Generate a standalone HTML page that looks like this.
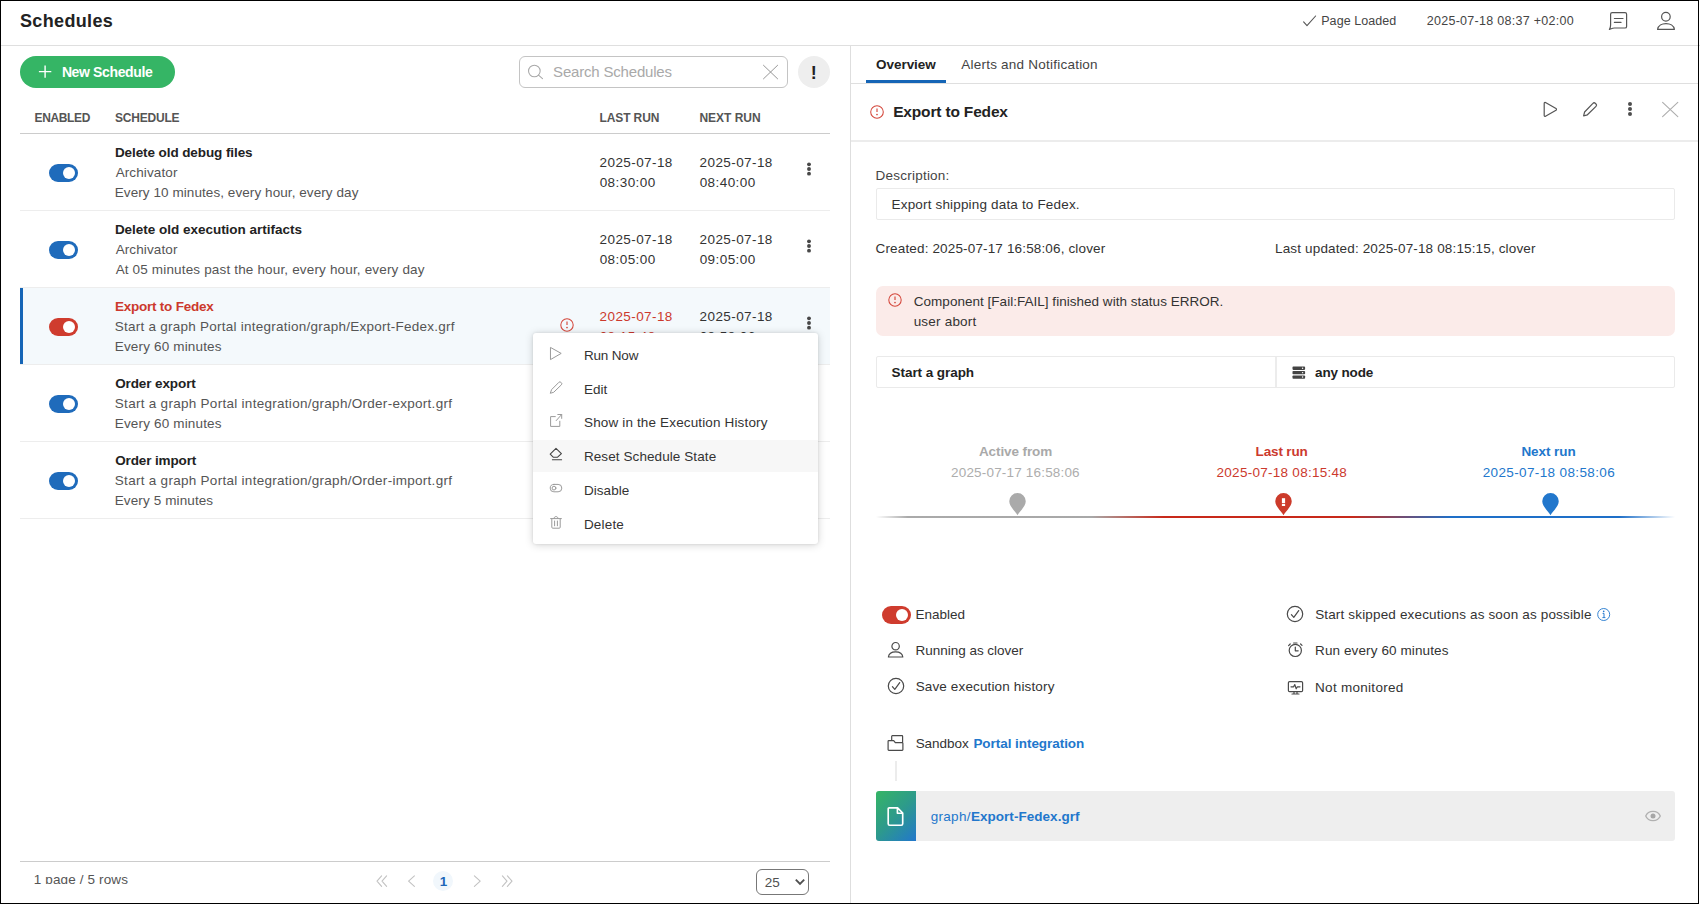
<!DOCTYPE html>
<html lang="en">
<head>
<meta charset="utf-8">
<title>Schedules</title>
<style>
*{box-sizing:border-box;margin:0;padding:0}
html,body{width:1700px;height:905px;overflow:hidden;background:#fff}
body{font-family:"Liberation Sans",sans-serif;font-size:13.5px;color:#333;position:relative}
.abs{position:absolute}
.t{position:absolute;white-space:nowrap;line-height:20px}
#frame{position:absolute;left:0;top:0;width:1699px;height:904px;border:1px solid #000;z-index:50;pointer-events:none}
.hline{position:absolute;height:1px;background:#dcdcdc}
.vline{position:absolute;width:1px;background:#dcdcdc}
svg{position:absolute;overflow:visible}
.ico{fill:none;stroke:#4a4a4a;stroke-width:1.2;stroke-linecap:round;stroke-linejoin:round}
</style>
</head>
<body>
<div id="frame"></div>

<!-- ===== top header ===== -->
<div id="hdr">
<div class="t" style="left:19.95px;top:11px;font-size:18px;color:#222;font-weight:bold;letter-spacing:0.359px;">Schedules</div>
<svg class="ico" style="left:1300px;top:12px;stroke:#555;stroke-width:1.1" width="20" height="18" viewBox="0 0 20 18"><path d="M3.6 9.9L7 13.7L15.6 4"/></svg>
<div class="t" style="left:1321.21px;top:11px;font-size:12.5px;color:#444;letter-spacing:0.071px;">Page Loaded</div><div class="t" style="left:1426.70px;top:11px;font-size:12.5px;color:#444;letter-spacing:0.289px;">2025-07-18 08:37 +02:00</div>
<svg class="ico" style="left:1606px;top:9px;stroke:#555" width="24" height="24" viewBox="0 0 24 24"><path d="M6.2 3.7H19A1.6 1.6 0 0 1 20.6 5.3V17.4A1.6 1.6 0 0 1 19 19H8.5C6.5 19 5.2 19.8 3.4 20.5C4.4 18.8 4.6 17.6 4.6 16V5.3A1.6 1.6 0 0 1 6.2 3.7ZM8.4 9.5H17M8.4 13.4H15"/></svg>
<svg class="ico" style="left:1654px;top:9px;stroke:#555" width="24" height="24" viewBox="0 0 24 24"><circle cx="11.9" cy="7.75" r="4.3"/><path d="M3.6 20.4C4.6 12.6 19.4 12.6 20.4 20.4Z"/></svg>
<div class="hline" style="left:0;top:45px;width:1700px;background:#dfdfdf"></div>
</div>

<!-- ===== left panel ===== -->
<div id="left">
<div class="abs" style="left:20px;top:56px;width:155px;height:32px;border-radius:16px;background:#35b565"></div>
<svg style="left:38px;top:64px" width="16" height="16" viewBox="0 0 16 16"><path d="M7.1 1.4V13.8M0.9 7.6H13.3" stroke="#fff" stroke-width="1.4" fill="none"/></svg>
<div class="t" style="left:61.89px;top:62px;font-size:14px;color:#fff;font-weight:bold;letter-spacing:-0.361px;">New Schedule</div>
<div class="abs" style="left:519px;top:56px;width:269px;height:32px;border:1px solid #c4c4c4;border-radius:6px;background:#fff"></div>
<svg class="ico" style="left:526px;top:63px;stroke:#a8a8a8;stroke-width:1.05" width="20" height="20" viewBox="0 0 20 20"><circle cx="8.35" cy="8" r="5.8"/><path d="M12.5 12.1L16.5 15.6"/></svg>
<div class="t" style="left:553.10px;top:62px;font-size:15px;color:#a9a9a9;letter-spacing:-0.189px;">Search Schedules</div>
<svg class="ico" style="left:762px;top:64px;stroke:#909090;stroke-width:0.95;stroke-linecap:butt" width="18" height="18" viewBox="0 0 18 18"><path d="M1.2 1L15.9 15.1M15.9 1L1.2 15.1"/></svg>
<div class="abs" style="left:798px;top:56px;width:32px;height:32px;border-radius:16px;background:#eeeeee"></div>
<div class="t" style="left:810.74px;top:63px;font-size:18px;color:#222;font-weight:bold;">!</div>

<div class="t" style="left:34.58px;top:108px;font-size:12px;color:#555;font-weight:bold;letter-spacing:-0.373px;">ENABLED</div><div class="t" style="left:115.03px;top:108px;font-size:12px;color:#555;font-weight:bold;letter-spacing:-0.213px;">SCHEDULE</div><div class="t" style="left:599.58px;top:108px;font-size:12px;color:#555;font-weight:bold;letter-spacing:-0.127px;">LAST RUN</div><div class="t" style="left:699.48px;top:108px;font-size:12px;color:#555;font-weight:bold;letter-spacing:-0.031px;">NEXT RUN</div>
<div class="hline" style="left:20px;top:133px;width:810px;background:#cccccc"></div>
<div class="hline" style="left:20px;top:210px;width:810px;background:#ededed"></div><div class="abs" style="left:49px;top:164px;width:29px;height:18px;border-radius:9px;background:#1f6bbb"><div class="abs" style="left:13.7px;top:2.8px;width:12.4px;height:12.4px;border-radius:6.2px;background:#fff"></div></div><div class="t" style="left:114.90px;top:143px;font-size:13.5px;color:#222;font-weight:bold;letter-spacing:-0.087px;">Delete old debug files</div><div class="t" style="left:115.63px;top:163px;font-size:13.5px;color:#555;letter-spacing:0.116px;">Archivator</div><div class="t" style="left:114.75px;top:183px;font-size:13.5px;color:#555;letter-spacing:0.073px;">Every 10 minutes, every hour, every day</div><div class="t" style="left:599.56px;top:153px;font-size:13.5px;color:#333;letter-spacing:0.417px;">2025-07-18</div><div class="t" style="left:599.63px;top:173px;font-size:13.5px;color:#333;letter-spacing:0.441px;">08:30:00</div><div class="t" style="left:699.56px;top:153px;font-size:13.5px;color:#333;letter-spacing:0.417px;">2025-07-18</div><div class="t" style="left:699.63px;top:173px;font-size:13.5px;color:#333;letter-spacing:0.441px;">08:40:00</div><svg style="left:804.9px;top:158.8px" width="8" height="20" viewBox="-4 -10 8 20"><circle cx="0" cy="-4.65" r="1.95" fill="#484848"/><circle cx="0" cy="0" r="1.95" fill="#484848"/><circle cx="0" cy="4.65" r="1.95" fill="#484848"/></svg>
<div class="hline" style="left:20px;top:287px;width:810px;background:#ededed"></div><div class="abs" style="left:49px;top:241px;width:29px;height:18px;border-radius:9px;background:#1f6bbb"><div class="abs" style="left:13.7px;top:2.8px;width:12.4px;height:12.4px;border-radius:6.2px;background:#fff"></div></div><div class="t" style="left:114.90px;top:220px;font-size:13.5px;color:#222;font-weight:bold;letter-spacing:-0.018px;">Delete old execution artifacts</div><div class="t" style="left:115.63px;top:240px;font-size:13.5px;color:#555;letter-spacing:0.116px;">Archivator</div><div class="t" style="left:115.63px;top:260px;font-size:13.5px;color:#555;letter-spacing:0.162px;">At 05 minutes past the hour, every hour, every day</div><div class="t" style="left:599.56px;top:230px;font-size:13.5px;color:#333;letter-spacing:0.417px;">2025-07-18</div><div class="t" style="left:599.63px;top:250px;font-size:13.5px;color:#333;letter-spacing:0.441px;">08:05:00</div><div class="t" style="left:699.56px;top:230px;font-size:13.5px;color:#333;letter-spacing:0.417px;">2025-07-18</div><div class="t" style="left:699.63px;top:250px;font-size:13.5px;color:#333;letter-spacing:0.441px;">09:05:00</div><svg style="left:804.9px;top:235.8px" width="8" height="20" viewBox="-4 -10 8 20"><circle cx="0" cy="-4.65" r="1.95" fill="#484848"/><circle cx="0" cy="0" r="1.95" fill="#484848"/><circle cx="0" cy="4.65" r="1.95" fill="#484848"/></svg>
<div class="abs" style="left:20px;top:288px;width:810px;height:76px;background:#f4f9fc"></div><div class="abs" style="left:20px;top:288px;width:3px;height:77px;background:#1565b6"></div><div class="hline" style="left:20px;top:364px;width:810px;background:#ededed"></div><div class="abs" style="left:49px;top:318px;width:29px;height:18px;border-radius:9px;background:#cf3c2e"><div class="abs" style="left:13.7px;top:2.8px;width:12.4px;height:12.4px;border-radius:6.2px;background:#fff"></div></div><div class="t" style="left:114.90px;top:297px;font-size:13.5px;color:#cc392d;font-weight:bold;letter-spacing:-0.222px;">Export to Fedex</div><div class="t" style="left:114.84px;top:317px;font-size:13.5px;color:#555;letter-spacing:0.244px;">Start a graph Portal integration/graph/Export-Fedex.grf</div><div class="t" style="left:114.75px;top:337px;font-size:13.5px;color:#555;letter-spacing:0.162px;">Every 60 minutes</div><svg style="left:804.9px;top:312.8px" width="8" height="20" viewBox="-4 -10 8 20"><circle cx="0" cy="-4.65" r="1.95" fill="#484848"/><circle cx="0" cy="0" r="1.95" fill="#484848"/><circle cx="0" cy="4.65" r="1.95" fill="#484848"/></svg>
<div class="hline" style="left:20px;top:441px;width:810px;background:#ededed"></div><div class="abs" style="left:49px;top:395px;width:29px;height:18px;border-radius:9px;background:#1f6bbb"><div class="abs" style="left:13.7px;top:2.8px;width:12.4px;height:12.4px;border-radius:6.2px;background:#fff"></div></div><div class="t" style="left:115.19px;top:374px;font-size:13.5px;color:#222;font-weight:bold;letter-spacing:-0.107px;">Order export</div><div class="t" style="left:114.84px;top:394px;font-size:13.5px;color:#555;letter-spacing:0.282px;">Start a graph Portal integration/graph/Order-export.grf</div><div class="t" style="left:114.75px;top:414px;font-size:13.5px;color:#555;letter-spacing:0.162px;">Every 60 minutes</div>
<div class="hline" style="left:20px;top:518px;width:810px;background:#ededed"></div><div class="abs" style="left:49px;top:472px;width:29px;height:18px;border-radius:9px;background:#1f6bbb"><div class="abs" style="left:13.7px;top:2.8px;width:12.4px;height:12.4px;border-radius:6.2px;background:#fff"></div></div><div class="t" style="left:115.19px;top:451px;font-size:13.5px;color:#222;font-weight:bold;letter-spacing:-0.123px;">Order import</div><div class="t" style="left:114.84px;top:471px;font-size:13.5px;color:#555;letter-spacing:0.282px;">Start a graph Portal integration/graph/Order-import.grf</div><div class="t" style="left:114.75px;top:491px;font-size:13.5px;color:#555;letter-spacing:0.113px;">Every 5 minutes</div>
<div class="t" style="left:599.56px;top:307px;font-size:13.5px;color:#cc392d;letter-spacing:0.417px;">2025-07-18</div><div class="t" style="left:599.63px;top:327px;font-size:13.5px;color:#cc392d;letter-spacing:0.445px;">08:15:48</div><div class="t" style="left:699.56px;top:307px;font-size:13.5px;color:#333;letter-spacing:0.417px;">2025-07-18</div><div class="t" style="left:699.63px;top:327px;font-size:13.5px;color:#333;letter-spacing:0.448px;">08:58:06</div><svg style="left:558.8px;top:317.4px" width="16" height="16" viewBox="-8 -8 16 16"><circle cx="0" cy="0" r="6.2" fill="none" stroke="#d4473b" stroke-width="1.05"/><path d="M0 -3.5V0.1" stroke="#d4473b" stroke-width="1.15" fill="none"/><circle cx="0" cy="2.5" r="0.85" fill="#d4473b"/></svg>
<div class="hline" style="left:20px;top:861px;width:810px;background:#cccccc"></div>
<div class="abs" style="left:20px;top:866px;width:200px;height:18px;overflow:hidden"><div class="t" style="left:13.81px;top:4px;font-size:13.5px;color:#555;letter-spacing:0.133px;">1 page / 5 rows</div></div>
<svg class="ico" style="left:374px;top:873px;stroke:#c2c2c2;stroke-width:1.1" width="16" height="16" viewBox="0 0 16 16"><path d="M7.6 2.8L3 8.1L7.6 13.4M12.6 2.8L8 8.1L12.6 13.4"/></svg>
<svg class="ico" style="left:404px;top:873px;stroke:#c2c2c2;stroke-width:1.1" width="16" height="16" viewBox="0 0 16 16"><path d="M10.4 2.8L4.6 8.1L10.4 13.4"/></svg>
<div class="abs" style="left:433px;top:871px;width:20px;height:20px;border-radius:10px;background:#f1f7fc"></div>
<div class="t" style="left:439.75px;top:872px;font-size:13.5px;color:#1e66b8;font-weight:bold;">1</div>
<svg class="ico" style="left:469px;top:873px;stroke:#c2c2c2;stroke-width:1.1" width="16" height="16" viewBox="0 0 16 16"><path d="M5.4 2.8L11.2 8.1L5.4 13.4"/></svg>
<svg class="ico" style="left:499px;top:873px;stroke:#c2c2c2;stroke-width:1.1" width="16" height="16" viewBox="0 0 16 16"><path d="M3.4 2.8L8 8.1L3.4 13.4M8.4 2.8L13 8.1L8.4 13.4"/></svg>
<div class="abs" style="left:756px;top:869px;width:53px;height:26px;border:1px solid #777;border-radius:6px;background:#fff"></div>
<div class="t" style="left:764.86px;top:873px;font-size:13.5px;color:#505050;">25</div>
<svg style="left:794px;top:877px" width="12" height="10" viewBox="0 0 12 10"><path d="M1.8 2.6L6 6.8L10.2 2.6" fill="none" stroke="#505050" stroke-width="1.9"/></svg>
</div>

<!-- ===== right panel ===== -->
<div id="right">
<div class="vline" style="left:850px;top:46px;height:858px;background:#dedede"></div>
<div class="t" style="left:875.99px;top:55px;font-size:13.5px;color:#222;font-weight:bold;letter-spacing:-0.029px;">Overview</div><div class="t" style="left:961.23px;top:55px;font-size:13.5px;color:#444;letter-spacing:0.231px;">Alerts and Notification</div>
<div class="abs" style="left:866px;top:80px;width:80px;height:3px;background:#1565b6"></div>
<div class="hline" style="left:851px;top:83px;width:848px;background:#dfdfdf"></div>
<svg style="left:869px;top:103.6px" width="16" height="16" viewBox="-8 -8 16 16"><circle cx="0" cy="0" r="6.3" fill="none" stroke="#d4473b" stroke-width="1.05"/><path d="M0 -3.5V0.1" stroke="#d4473b" stroke-width="1.15" fill="none"/><circle cx="0" cy="2.5" r="0.85" fill="#d4473b"/></svg><div class="t" style="left:893.21px;top:102px;font-size:15.5px;color:#222;font-weight:bold;letter-spacing:-0.170px;">Export to Fedex</div>
<svg class="ico" style="left:1540px;top:100px;stroke:#555" width="20" height="20" viewBox="0 0 20 20"><path d="M4.2 3.4C4.2 2.6 4.9 2.3 5.5 2.6L16 8.6C16.6 9 16.6 9.8 16 10.2L5.5 16.2C4.9 16.5 4.2 16.2 4.2 15.4Z"/></svg>
<svg class="ico" style="left:1580px;top:100px;stroke:#555" width="20" height="20" viewBox="0 0 20 20"><path d="M3.6 15.8L4.6 12L12.9 3.4A1.7 1.7 0 0 1 15.3 3.3L16 4A1.7 1.7 0 0 1 16 6.4L7.4 14.8Z"/></svg>
<svg style="left:1626px;top:99.3px" width="8" height="20" viewBox="-4 -10 8 20"><circle cx="0" cy="-5" r="2" fill="#4e4e4e"/><circle cx="0" cy="0" r="2" fill="#4e4e4e"/><circle cx="0" cy="5" r="2" fill="#4e4e4e"/></svg>
<svg class="ico" style="left:1660px;top:100px;stroke:#adadad;stroke-width:1.1" width="20" height="20" viewBox="0 0 20 20"><path d="M2.6 2.3L17.8 16.7M17.8 2.3L2.6 16.7"/></svg>
<div class="abs" style="left:851px;top:140px;width:848px;height:2px;background:#ececec"></div>

<div class="t" style="left:875.55px;top:166px;font-size:13.5px;color:#444;letter-spacing:0.229px;">Description:</div>
<div class="abs" style="left:876px;top:188px;width:799px;height:32px;border:1px solid #eaeaea;border-radius:2px;background:#fff"></div>
<div class="t" style="left:891.55px;top:195px;font-size:13.5px;color:#333;letter-spacing:0.169px;">Export shipping data to Fedex.</div><div class="t" style="left:875.59px;top:239px;font-size:13.5px;color:#333;letter-spacing:0.150px;">Created: 2025-07-17 16:58:06, clover</div><div class="t" style="left:1275.05px;top:239px;font-size:13.5px;color:#333;letter-spacing:0.150px;">Last updated: 2025-07-18 08:15:15, clover</div>
<div class="abs" style="left:876px;top:286px;width:799px;height:50px;border-radius:7px;background:#fbebe9"></div>
<svg style="left:886.8px;top:292.2px" width="16" height="16" viewBox="-8 -8 16 16"><circle cx="0" cy="0" r="6.2" fill="none" stroke="#d4473b" stroke-width="1.05"/><path d="M0 -3.5V0.1" stroke="#d4473b" stroke-width="1.15" fill="none"/><circle cx="0" cy="2.5" r="0.85" fill="#d4473b"/></svg><div class="t" style="left:913.79px;top:292px;font-size:13.5px;color:#333;letter-spacing:0.024px;">Component [Fail:FAIL] finished with status ERROR.</div><div class="t" style="left:913.65px;top:312px;font-size:13.5px;color:#333;letter-spacing:0.207px;">user abort</div>
<div class="abs" style="left:876px;top:356px;width:799px;height:32px;border:1px solid #eaeaea;border-radius:2px;background:#fff"></div>
<div class="abs" style="left:1275px;top:357px;width:2px;height:30px;background:#ececec"></div>
<div class="t" style="left:891.60px;top:363px;font-size:13.5px;color:#222;font-weight:bold;letter-spacing:-0.066px;">Start a graph</div>
<svg style="left:1292px;top:365.5px" width="14" height="14" viewBox="0 0 14 14"><rect x="0.5" y="0.6" width="12.6" height="3.3" rx="0.8" fill="#444"/><rect x="0.5" y="5" width="12.6" height="3.3" rx="0.8" fill="#444"/><rect x="0.5" y="9.4" width="12.6" height="3.3" rx="0.8" fill="#444"/><circle cx="10.6" cy="2.25" r="0.7" fill="#fff"/><circle cx="10.6" cy="6.65" r="0.7" fill="#fff"/><circle cx="10.6" cy="11.05" r="0.7" fill="#fff"/></svg>
<div class="t" style="left:1315.09px;top:363px;font-size:13.5px;color:#222;font-weight:bold;letter-spacing:-0.155px;">any node</div>

<div class="t" style="left:978.91px;top:442px;font-size:13.5px;color:#a9a9a9;font-weight:bold;letter-spacing:-0.093px;">Active from</div><div class="t" style="left:951.06px;top:463px;font-size:13.5px;color:#adadad;letter-spacing:0.179px;">2025-07-17 16:58:06</div><div class="t" style="left:1255.60px;top:442px;font-size:13.5px;color:#cc392d;font-weight:bold;letter-spacing:-0.155px;">Last run</div><div class="t" style="left:1216.56px;top:463px;font-size:13.5px;color:#cc392d;letter-spacing:0.272px;">2025-07-18 08:15:48</div><div class="t" style="left:1521.40px;top:442px;font-size:13.5px;color:#2277cc;font-weight:bold;letter-spacing:-0.056px;">Next run</div><div class="t" style="left:1482.66px;top:463px;font-size:13.5px;color:#2277cc;letter-spacing:0.371px;">2025-07-18 08:58:06</div>
<div class="abs" style="left:876px;top:516px;width:799px;height:2px;background:linear-gradient(to right,rgba(170,170,170,0) 0%,#aaaaaa 4%,#a8a8a8 27%,#c8291a 36%,#c8291a 59.5%,#1e6fc8 72%,#1e6fc8 93%,rgba(30,111,200,0) 100%)"></div>
<svg style="left:1008.8px;top:492.8px" width="17" height="23" viewBox="-8.5 0 17 23"><path d="M0 22.2C-2.2 18.6 -8.25 13.2 -8.25 8.25A8.25 8.25 0 0 1 8.25 8.25C8.25 13.2 2.2 18.6 0 22.2Z" fill="#aaaaaa"/></svg><svg style="left:1275px;top:492.8px" width="17" height="23" viewBox="-8.5 0 17 23"><path d="M0 22.2C-2.2 18.6 -8.25 13.2 -8.25 8.25A8.25 8.25 0 0 1 8.25 8.25C8.25 13.2 2.2 18.6 0 22.2Z" fill="#cc3b2b"/><rect x="-1.6" y="5.2" width="3.2" height="5" fill="#fff"/><rect x="-1.6" y="11" width="3.2" height="2" fill="#fff"/></svg><svg style="left:1541.5px;top:492.8px" width="17" height="23" viewBox="-8.5 0 17 23"><path d="M0 22.2C-2.2 18.6 -8.25 13.2 -8.25 8.25A8.25 8.25 0 0 1 8.25 8.25C8.25 13.2 2.2 18.6 0 22.2Z" fill="#2277cc"/></svg>

<div class="abs" style="left:882px;top:606px;width:29px;height:18px;border-radius:9px;background:#cf3c2e"><div class="abs" style="left:13.7px;top:2.8px;width:12.4px;height:12.4px;border-radius:6.2px;background:#fff"></div></div><div class="t" style="left:915.55px;top:605px;font-size:13.5px;color:#333;letter-spacing:-0.017px;">Enabled</div>
<svg class="ico" style="left:885px;top:640px" width="20" height="20" viewBox="0 0 20 20"><circle cx="10.6" cy="6.2" r="3.7"/><path d="M3.4 17C4.2 10.2 17 10.2 17.8 17Z"/></svg>
<div class="t" style="left:915.55px;top:641px;font-size:13.5px;color:#333;letter-spacing:-0.022px;">Running as clover</div><svg class="ico" style="left:885.5px;top:676.4px" width="20" height="20" viewBox="-10 -10 20 20"><circle cx="0" cy="0" r="7.7"/><path d="M-3.6 0.6L-1.2 3.4L3.7 -3.4"/></svg><div class="t" style="left:915.64px;top:677px;font-size:13.5px;color:#333;letter-spacing:0.141px;">Save execution history</div><svg class="ico" style="left:1285.3px;top:604.4px" width="20" height="20" viewBox="-10 -10 20 20"><circle cx="0" cy="0" r="7.7"/><path d="M-3.6 0.6L-1.2 3.4L3.7 -3.4"/></svg><div class="t" style="left:1315.14px;top:605px;font-size:13.5px;color:#333;letter-spacing:0.160px;">Start skipped executions as soon as possible</div>
<svg style="left:1596px;top:607px" width="16" height="16" viewBox="-8 -8 16 16"><circle cx="-0.3" cy="-0.5" r="6" fill="none" stroke="#2a7dd0" stroke-width="0.95"/><path d="M-1.4 -1.6H0V2.4M-1.6 2.6H1.4" stroke="#2a7dd0" stroke-width="1" fill="none"/><circle cx="-0.3" cy="-3.6" r="0.8" fill="#2277cc"/></svg>
<svg class="ico" style="left:1285px;top:640px" width="20" height="20" viewBox="0 0 20 20"><circle cx="10.3" cy="10.4" r="6.1"/><path d="M10.3 7V10.8H13.2M8.6 3H12M3.6 5.6L5.2 4M15.6 4L17 5.4"/></svg>
<div class="t" style="left:1315.05px;top:641px;font-size:13.5px;color:#333;letter-spacing:0.109px;">Run every 60 minutes</div>
<svg class="ico" style="left:1285px;top:678px" width="20" height="20" viewBox="0 0 20 20"><rect x="3.4" y="3.6" width="14.2" height="10" rx="1.2"/><path d="M7 16H14M9 13.6V16M12 13.6V16M6 8.8H8.6L9.8 6.6L11.2 10.8L12.4 8.8H15"/></svg>
<div class="t" style="left:1315.05px;top:678px;font-size:13.5px;color:#333;letter-spacing:0.288px;">Not monitored</div>
<svg class="ico" style="left:885px;top:733px" width="20" height="20" viewBox="0 0 20 20"><path d="M6.7 7.4V3.3A0.6 0.6 0 0 1 7.3 2.7H17A0.6 0.6 0 0 1 17.6 3.3V9.4M3.1 8.3A0.7 0.7 0 0 1 3.8 7.6H8.7L10.3 9.7H17.2A0.7 0.7 0 0 1 17.9 10.4V16.6A0.7 0.7 0 0 1 17.2 17.3H3.8A0.7 0.7 0 0 1 3.1 16.6Z"/></svg>
<div class="t" style="left:915.64px;top:734px;font-size:13.5px;color:#333;letter-spacing:-0.048px;">Sandbox</div><div class="t" style="left:973.40px;top:734px;font-size:13.5px;color:#2277cc;font-weight:bold;letter-spacing:-0.051px;">Portal integration</div>
<div class="abs" style="left:895px;top:761px;width:2px;height:20px;background:#ececec"></div>
<div class="abs" style="left:876px;top:791px;width:799px;height:50px;border-radius:3px;background:#eeeeee"></div>
<div class="abs" style="left:876px;top:791px;width:40px;height:50px;border-radius:3px 0 0 3px;background:linear-gradient(135deg,#35b565 0%,#2d9a8c 50%,#2277cc 100%)"></div>
<svg style="left:886px;top:806px" width="20" height="22" viewBox="0 0 20 22"><path d="M3.2 1.9H11.6L16.7 7V17.7A1.5 1.5 0 0 1 15.2 19.2H3.7A1.5 1.5 0 0 1 2.2 17.7V2.9A1 1 0 0 1 3.2 1.9ZM11.4 2.1V7.2H16.5" fill="none" stroke="#fff" stroke-width="1.65" stroke-linejoin="round"/></svg>
<div class="t" style="left:930.72px;top:807px;font-size:13.5px;color:#2277cc;letter-spacing:0.295px;">graph/</div><div class="t" style="left:970.90px;top:807px;font-size:13.5px;color:#2277cc;font-weight:bold;letter-spacing:0.039px;">Export-Fedex.grf</div>
<svg class="ico" style="left:1643px;top:807px;stroke:#b0b0b0;stroke-width:1.3" width="20" height="18" viewBox="0 0 20 18"><path d="M2.7 9C5.4 2.8 14.6 2.8 17.3 9C14.6 15.2 5.4 15.2 2.7 9Z"/><circle cx="10" cy="9" r="2.5" fill="#a6a6a6" stroke="none"/></svg>
</div>

<!-- ===== popup menu ===== -->
<div id="menu">
<div class="abs" style="left:533px;top:333px;width:285px;height:211px;border-radius:3px;background:#fff;box-shadow:0 1px 9px rgba(0,0,0,0.17),0 0 3px rgba(0,0,0,0.10)"></div>
<div class="abs" style="left:533px;top:440px;width:285px;height:32px;background:#f7f7f7"></div>
<svg class="ico" style="left:549px;top:345px;stroke:#9a9a9a;stroke-width:1" width="16" height="18" viewBox="0 0 16 18"><path d="M1.8 2.6L12.2 8.4L1.8 14.4Z"/></svg><svg class="ico" style="left:549px;top:380px;stroke:#9a9a9a;stroke-width:1" width="16" height="16" viewBox="0 0 16 16"><path d="M1.4 12.9L2.6 9.6L9.9 2.3A1.4 1.4 0 0 1 11.9 2.3L12.4 2.8A1.4 1.4 0 0 1 12.4 4.8L5 12Z"/></svg><svg class="ico" style="left:549px;top:413px;stroke:#9a9a9a;stroke-width:1" width="16" height="16" viewBox="0 0 16 16"><path d="M6.3 3.6H1.6V13.4H10.8V8.2M7.2 7.6L12.6 1.6M8.8 1.5H12.7V5.4"/></svg><svg class="ico" style="left:548px;top:447px;stroke:#444;stroke-width:1.1" width="16" height="16" viewBox="0 0 16 16"><path d="M8 1.4L13.4 6.6L9.6 10.2H5.2L2.2 7.2Z M4.4 12.8H13.6"/></svg><svg class="ico" style="left:549px;top:483px;stroke:#9a9a9a;stroke-width:1" width="16" height="12" viewBox="0 0 16 12"><rect x="1.2" y="1.4" width="11.6" height="7.4" rx="3.7"/><circle cx="5" cy="5.1" r="1.9"/></svg><svg class="ico" style="left:549px;top:515px;stroke:#9a9a9a;stroke-width:1" width="16" height="16" viewBox="0 0 16 16"><path d="M1.6 3.6H12.4M5 3.4C5 0.8 9 0.8 9 3.4M2.8 3.8V12.2A1 1 0 0 0 3.8 13.2H10.2A1 1 0 0 0 11.2 12.2V3.8M5.6 6V10.8M8.4 6V10.8"/></svg><div class="t" style="left:583.95px;top:346px;font-size:13.5px;color:#333;letter-spacing:-0.176px;">Run Now</div><div class="t" style="left:583.95px;top:380px;font-size:13.5px;color:#333;letter-spacing:0.020px;">Edit</div><div class="t" style="left:584.04px;top:413px;font-size:13.5px;color:#333;letter-spacing:0.146px;">Show in the Execution History</div><div class="t" style="left:583.95px;top:447px;font-size:13.5px;color:#333;letter-spacing:0.085px;">Reset Schedule State</div><div class="t" style="left:583.95px;top:481px;font-size:13.5px;color:#333;letter-spacing:0.055px;">Disable</div><div class="t" style="left:583.95px;top:515px;font-size:13.5px;color:#333;letter-spacing:0.178px;">Delete</div>
</div>

</body>
</html>
